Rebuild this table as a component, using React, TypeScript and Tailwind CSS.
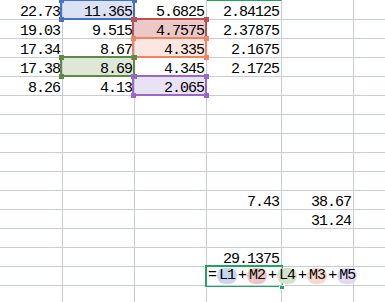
import React from 'react';

const cols = 6;

const data: string[][] = [
  ['22.73', '11.365', '5.6825', '2.84125', '', ''],
  ['19.03', '9.515', '4.7575', '2.37875', '', ''],
  ['17.34', '8.67', '4.335', '2.1675', '', ''],
  ['17.38', '8.69', '4.345', '2.1725', '', ''],
  ['8.26', '4.13', '2.065', '', '', ''],
  ['', '', '', '', '', ''],
  ['', '', '', '', '', ''],
  ['', '', '', '', '', ''],
  ['', '', '', '', '', ''],
  ['', '', '', '', '', ''],
  ['', '', '', '7.43', '38.67', ''],
  ['', '', '', '', '31.24', ''],
  ['', '', '', '', '', ''],
  ['', '', '', '29.1375', '', ''],
  ['', '', '', '', '', ''],
  ['', '', '', '', '', ''],
];

// cell fills for the referenced cells
const fills: Record<string, string> = {
  '0-1': 'bg-[#dbe2f5]',
  '1-2': 'bg-[#ecc9c8]',
  '2-2': 'bg-[#fce7e0]',
  '3-1': 'bg-[#dfe7d8]',
  '4-2': 'bg-[#e9e2f4]',
};

const refs = [
  { text: 'L1', cls: 'bg-[#c9d5f2]' },
  { text: 'M2', cls: 'bg-[#ecc6c5]' },
  { text: 'L4', cls: 'bg-[#d5e2cc]' },
  { text: 'M3', cls: 'bg-[#fad9cd]' },
  { text: 'M5', cls: 'bg-[#e2d8f4]' },
];

const RefBox: React.FC<{ className: string; handle: string }> = ({ className, handle }) => (
  <div className={`absolute w-[75px] h-[21px] border-2 ${className}`}>
    <div className={`absolute -left-[3px] -top-[3px] w-[5px] h-[5px] ${handle}`} />
    <div className={`absolute -right-[4px] -top-[3px] w-[5px] h-[5px] ${handle}`} />
    <div className={`absolute -left-[3px] -bottom-[4px] w-[5px] h-[5px] ${handle}`} />
    <div className={`absolute -right-[4px] -bottom-[4px] w-[5px] h-[5px] ${handle}`} />
  </div>
);

const Formula: React.FC = () => (
  <span className="flex items-center whitespace-nowrap">
    <span>=</span>
    {refs.map((r, i) => (
      <React.Fragment key={r.text}>
        {i > 0 && <span>+</span>}
        <span className={`mx-[1px] px-[2px] py-[2px] rounded-full ${r.cls}`}>{r.text}</span>
      </React.Fragment>
    ))}
  </span>
);

export default function App() {
  return (
    <div className="relative w-[385px] h-[302px] overflow-hidden bg-white text-black [font-family:'Liberation_Mono',monospace] text-[15px] tracking-[-1px]">
      <div className="grid grid-cols-[63px_72px_72px_75px_72px_1fr] grid-rows-[20px_repeat(15,19px)]">
        {data.map((row, r) =>
          row.map((val, c) => {
            const fill = fills[`${r}-${c}`] ?? '';
            const last = c === cols - 1;
            if (r === 14 && c === 3) {
              // formula spills over into the next cell
              return (
                <div
                  key={`${r}-${c}`}
                  className="relative z-30 flex items-center justify-start pl-[1px] border-r border-b border-[#c8ccd6] leading-[12px] overflow-visible"
                >
                  <Formula />
                </div>
              );
            }
            return (
              <div
                key={`${r}-${c}`}
                className={`flex items-end justify-end pr-[2px] border-b border-[#c8ccd6] leading-[12px] ${last ? '' : 'border-r'} ${fill} ${r === 0 && c === 3 ? 'border-t border-t-[#1fa463]' : ''}`}
              >
                {val}
              </div>
            );
          })
        )}
      </div>

      {/* reference boxes */}
      <RefBox className="left-[60px] -top-[1px] border-[#4472c4]" handle="bg-[#4472c4]" />
      <RefBox className="left-[132px] top-[18px] border-[#c0504d]" handle="bg-[#c0504d]" />
      <RefBox className="left-[132px] top-[37px] border-[#f08462]" handle="bg-[#f08462]" />
      <RefBox className="left-[60px] top-[56px] border-[#5e8b43]" handle="bg-[#5e8b43]" />
      <RefBox className="left-[132px] top-[75px] border-[#9a69c8]" handle="bg-[#9a69c8]" />

      {/* active cell */}
      <div className="absolute z-20 left-[205px] top-[265px] w-[78px] h-[22px] border-2 border-[#1fa463]">
        <div className="absolute -right-[4px] -bottom-[5px] w-[6px] h-[5px] bg-[#1fa463] border border-white" />
      </div>
    </div>
  );
}
